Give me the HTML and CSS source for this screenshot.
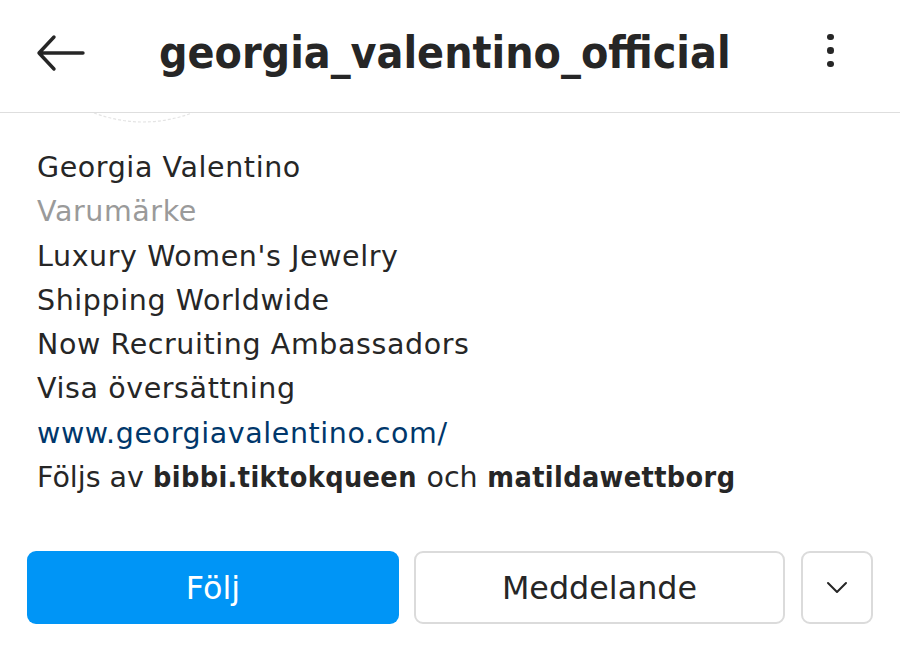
FILE: index.html
```html
<!DOCTYPE html>
<html lang="sv">
<head>
<meta charset="utf-8">
<link rel="stylesheet" href="styles.css">
</head>
<body>
<div class="page">
  <header class="topbar">
    <div class="back">
      <svg width="50" height="38" viewBox="0 0 50 38"><path d="M47 19H3M18 3L3 19l15 16" fill="none" stroke="#262626" stroke-width="3.4" stroke-linecap="round" stroke-linejoin="round"/></svg>
    </div>
    <h1 class="title">georgia_valentino_official</h1>
    <div class="kebab">
      <span class="dot"></span><span class="dot"></span><span class="dot"></span>
    </div>
  </header>
  <div class="avatar-peek">
    <svg width="110" height="12" viewBox="0 0 110 12"><path d="M6 0 Q55 18 104 0" fill="none" stroke="#e4e4e4" stroke-width="1.2" stroke-dasharray="3 2"/></svg>
  </div>
  <section class="bio">
    <div class="line">Georgia Valentino</div>
    <div class="line muted">Varumärke</div>
    <div class="line">Luxury Women's Jewelry</div>
    <div class="line">Shipping Worldwide</div>
    <div class="line">Now Recruiting Ambassadors</div>
    <div class="line">Visa översättning</div>
    <div class="line link">www.georgiavalentino.com/</div>
    <div class="line"><span class="tight">Följs av </span><b class="name">bibbi.tiktokqueen</b> <span class="tight">och</span> <b class="name">matildawettborg</b></div>
  </section>
  <div class="actions">
    <button class="btn primary">Följ</button>
    <button class="btn secondary">Meddelande</button>
    <button class="btn more">
      <svg width="22" height="13" viewBox="0 0 22 13"><path d="M2 2l9 9 9-9" fill="none" stroke="#262626" stroke-width="2" stroke-linecap="round" stroke-linejoin="round"/></svg>
    </button>
  </div>
</div>
</body>
</html>
```

FILE: styles.css
```css
html, body {
  margin: 0;
  padding: 0;
  background: #ffffff;
}
body {
  font-family: "DejaVu Sans", sans-serif;
  color: #262626;
}
.page {
  width: 900px;
  height: 645px;
  overflow: hidden;
}
.topbar {
  height: 113px;
  box-sizing: border-box;
  border-bottom: 1px solid #dedede;
  display: flex;
  align-items: center;
  padding-bottom: 7px;
}
.back {
  width: 50px;
  height: 38px;
  margin-left: 36px;
  display: flex;
}
.title {
  margin: 0 0 0 73px;
  font-family: "DejaVu Sans Condensed", "DejaVu Sans", sans-serif;
  font-size: 44.3px;
  line-height: 52px;
  font-weight: 700;
  flex: 1;
  color: #262626;
}
.kebab {
  width: 6px;
  display: flex;
  flex-direction: column;
  gap: 7px;
  margin-right: 67px;
  margin-top: -4px;
}
.dot {
  width: 6.5px;
  height: 6.5px;
  border-radius: 50%;
  background: #262626;
}
.avatar-peek {
  height: 12px;
  padding-left: 88px;
  line-height: 0;
}
.bio {
  padding: 21px 0 0 37px;
}
.line {
  font-size: 28.5px;
  line-height: 44.3px;
  letter-spacing: 0.6px;
  white-space: nowrap;
}
.tight {
  letter-spacing: 0;
}
.name {
  font-family: "DejaVu Sans Condensed", "DejaVu Sans", sans-serif;
  font-weight: 700;
  letter-spacing: 0.4px;
}
.muted {
  color: #9a9a9a;
}
.link {
  color: #00376b;
}
.actions {
  display: flex;
  gap: 15px;
  padding: 51px 0 0 27px;
}
.btn {
  height: 73px;
  border-radius: 9px;
  font-family: "DejaVu Sans", sans-serif;
  font-size: 31.8px;
  font-weight: 400;
  display: flex;
  align-items: center;
  justify-content: center;
  box-sizing: border-box;
  padding: 0;
}
.primary {
  width: 372px;
  background: #0095f6;
  color: #ffffff;
  border: none;
}
.secondary {
  width: 371px;
  background: #ffffff;
  color: #262626;
  border: 2px solid #dbdbdb;
}
.more {
  width: 72px;
  margin-left: 1px;
  background: #ffffff;
  border: 2px solid #dbdbdb;
}
```
